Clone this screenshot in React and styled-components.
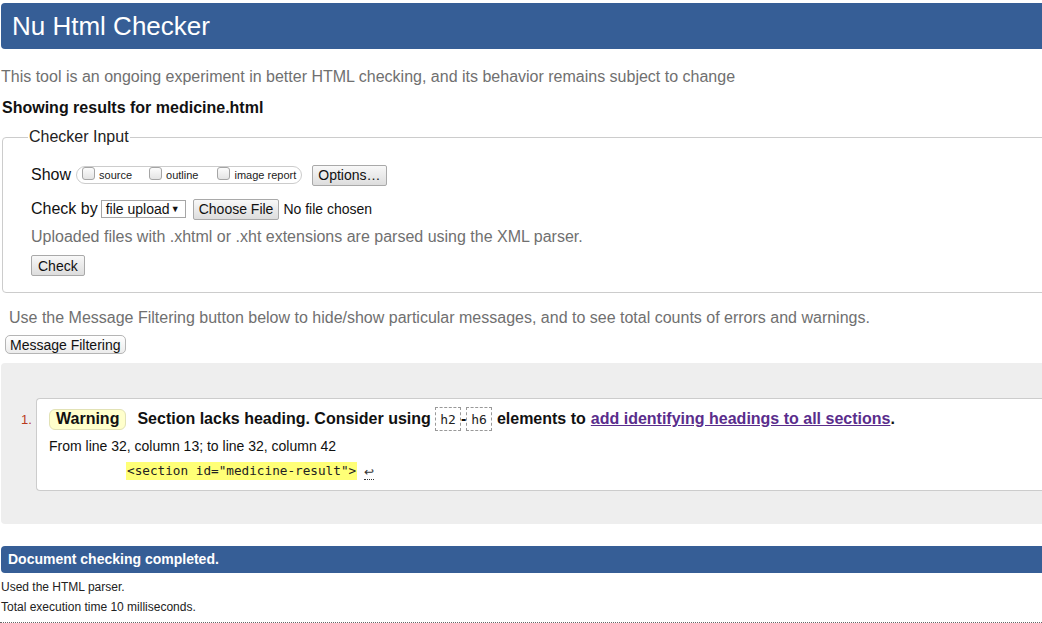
import React from "react";
import styled, { createGlobalStyle } from "styled-components";

const Global = createGlobalStyle`
  html, body { margin: 0; padding: 0; overflow: hidden; background: #fff; }
  body { font-family: "Liberation Sans", Arial, sans-serif; color: #000; }
  * { box-sizing: border-box; }
`;

const Page = styled.div`
  width: 1100px;
  padding-top: 3px;
`;

const Header = styled.h1`
  margin: 0 0 0 1px;
  height: 46px;
  line-height: 46px;
  padding-left: 11px;
  background: #365e96;
  color: #fff;
  font-size: 26px;
  font-weight: normal;
  border-radius: 4px 0 0 4px;
`;

const Intro = styled.p`
  font-size: 16px;
  line-height: 20px;
  color: ${(p) => p.$color || "#707070"};
  font-weight: ${(p) => (p.$bold ? "bold" : "normal")};
  margin: ${(p) => p.$mt ?? 18}px 0 0 ${(p) => p.$ml ?? 1}px;
`;

const Fieldset = styled.fieldset`
  margin: 9px 0 0 2px;
  padding: 16px 0 16px 28px;
  border: 1px solid #cccccc;
  border-radius: 4px;
  min-width: 0;
`;

const Legend = styled.legend`
  font-size: 16px;
  line-height: 20px;
  padding: 0 1px;
  margin-left: -3px;
  color: #222;
`;

const Row = styled.div`
  display: flex;
  align-items: center;
  height: ${(p) => p.$h || 24}px;
  margin-top: ${(p) => p.$mt || 0}px;
`;

const Label = styled.span`
  font-size: 16px;
  color: #111;
  white-space: nowrap;
  margin-right: ${(p) => p.$mr || 0}px;
`;

const Pill = styled.div`
  display: flex;
  align-items: center;
  height: 18px;
  padding: 0 5px;
  border: 1px solid #cccccc;
  border-radius: 9px;
  margin-right: 10px;
`;

const CheckItem = styled.label`
  display: flex;
  align-items: center;
  font-size: 11px;
  color: #222;
  white-space: nowrap;
  margin-right: ${(p) => p.$mr || 0}px;
`;

const Box = styled.input.attrs({ type: "checkbox" })`
  appearance: none;
  margin: 0 4px 0 0;
  width: 13px;
  height: 13px;
  border: 1px solid #a5a5a5;
  border-radius: 3px;
  background: linear-gradient(#fcfcfc, #e4e4e4);
  position: relative;
  top: -2px;
`;

const Button = styled.button`
  font-family: "Liberation Sans", Arial, sans-serif;
  font-size: 14px;
  color: #111;
  white-space: nowrap;
  height: ${(p) => p.$h || 21}px;
  padding: 0 ${(p) => p.$px ?? 6}px;
  border: 1px solid #a9a9a9;
  border-radius: ${(p) => p.$r || 2}px;
  background: linear-gradient(#f8f8f8, #dddddd);
  line-height: 1;
  margin: 0;
`;

const Select = styled.div`
  display: flex;
  flex-shrink: 0;
  align-items: center;
  justify-content: space-between;
  height: 18px;
  width: 85px;
  padding: 0 5px 0 4px;
  border: 1px solid #a6a6a6;
  font-size: 14px;
  white-space: nowrap;
  color: #111;
  margin-right: 7px;
  background: #fff;
  span { font-size: 9px; }
`;

const Small = styled.span`
  font-size: 14px;
  color: #111;
  white-space: nowrap;
  margin-left: 4px;
`;

const FilterButton = styled(Button)`
  display: block;
  margin: 7px 0 0 5px;
  background: linear-gradient(#ffffff, #ececec);
  border-color: #b5b5b5;
`;

const Results = styled.div`
  margin: 9px 0 0 1px;
  height: 161px;
  padding-top: 35px;
  background: #eeeeee;
  border-radius: 4px 0 0 4px;
  display: grid;
  grid-template-columns: 35px 1fr;
  align-items: start;
`;

const Num = styled.div`
  font-size: 13px;
  color: #b83a1e;
  padding: 14px 0 0 20px;
`;

const Card = styled.div`
  background: #fff;
  border: 1px solid #cccccc;
  border-right: none;
  border-radius: 4px 0 0 4px;
  height: 93px;
  padding: 8px 0 0 12px;
`;

const Title = styled.div`
  display: flex;
  align-items: center;
  height: 24px;
  font-size: 16px;
  font-weight: bold;
  color: #111;
  white-space: nowrap;
`;

const Badge = styled.span`
  display: inline-flex;
  align-items: center;
  height: 21px;
  padding: 0 6px;
  background: #ffffcc;
  border: 1px solid #e2e2b6;
  border-radius: 6px;
  margin-right: 11px;
`;

const CodeBox = styled.code`
  display: inline-flex;
  align-items: center;
  height: 24px;
  padding: 0 4px;
  border: 1px dashed #999999;
  font-family: "DejaVu Sans Mono", Consolas, monospace;
  font-size: 13px;
  font-weight: normal;
  color: #222;
  margin: 0 ${(p) => p.$mr || 0}px 0 ${(p) => p.$ml || 0}px;
`;

const Link = styled.a`
  color: #5a2d8c;
  text-decoration: underline;
  margin-left: 5px;
`;

const Location = styled.p`
  margin: 5px 0 0 0;
  font-size: 14px;
  line-height: 20px;
  color: #111;
`;

const Extract = styled.div`
  margin: 5px 0 0 77px;
  display: flex;
  align-items: center;
  height: 20px;
`;

const Mark = styled.code`
  background: #ffff77;
  font-family: "DejaVu Sans Mono", Consolas, monospace;
  font-size: 12.7px;
  line-height: 18px;
  color: #222;
  padding: 0 1px;
  white-space: pre;
`;

const Return = styled.span`
  margin-left: 7px;
  font-size: 12px;
  line-height: 14px;
  color: #333;
  border-bottom: 1px dotted #333;
  padding-top: 2px;
`;

const Bar = styled.div`
  margin: 22px 0 0 1px;
  height: 27px;
  line-height: 27px;
  padding-left: 7px;
  background: #365e96;
  color: #fff;
  font-size: 14px;
  font-weight: bold;
  border-radius: 4px 0 0 4px;
`;

const Stats = styled.div`
  margin-top: 4px;
  padding-left: 1px;
  font-size: 12px;
  line-height: 20px;
  color: #222;
  border-bottom: 1px dotted #666;
  padding-bottom: 5px;
`;

export default function App() {
  return (
    <>
      <Global />
      <Page>
        <Header>Nu Html Checker</Header>
        <Intro>
          This tool is an ongoing experiment in better HTML checking, and its
          behavior remains subject to change
        </Intro>
        <Intro $bold $color="#111" $mt={11} $ml={2}>
          Showing results for medicine.html
        </Intro>
        <Fieldset>
          <Legend>Checker Input</Legend>
          <Row>
            <Label $mr={5}>Show</Label>
            <Pill>
              <CheckItem $mr={17}>
                <Box />
                source
              </CheckItem>
              <CheckItem $mr={19}>
                <Box />
                outline
              </CheckItem>
              <CheckItem>
                <Box />
                image report
              </CheckItem>
            </Pill>
            <Button $px={5}>Options…</Button>
          </Row>
          <Row $mt={10}>
            <Label $mr={3}>Check by</Label>
            <Select>
              file upload <span>▼</span>
            </Select>
            <Button $px={5}>Choose File</Button>
            <Small>No file chosen</Small>
          </Row>
          <Intro $mt={6} $ml={0}>
            Uploaded files with .xhtml or .xht extensions are parsed using the
            XML parser.
          </Intro>
          <Row $mt={8} $h={21}>
            <Button $px={6}>Check</Button>
          </Row>
        </Fieldset>
        <Intro $mt={15} $ml={9}>
          Use the Message Filtering button below to hide/show particular
          messages, and to see total counts of errors and warnings.
        </Intro>
        <FilterButton $h={19} $r={5} $px={4}>
          Message Filtering
        </FilterButton>
        <Results>
          <Num>1.</Num>
          <Card>
            <Title>
              <Badge>Warning</Badge>
              Section lacks heading. Consider using&nbsp;
              <CodeBox>h2</CodeBox>
              <span>-</span>
              <CodeBox $mr={5}>h6</CodeBox>
              elements to
              <Link href="#">add identifying headings to all sections</Link>.
            </Title>
            <Location>From line 32, column 13; to line 32, column 42</Location>
            <Extract>
              <Mark>&lt;section id="medicine-result"&gt;</Mark>
              <Return>↩</Return>
            </Extract>
          </Card>
        </Results>
        <Bar>Document checking completed.</Bar>
        <Stats>
          <div>Used the HTML parser.</div>
          <div>Total execution time 10 milliseconds.</div>
        </Stats>
      </Page>
    </>
  );
}
